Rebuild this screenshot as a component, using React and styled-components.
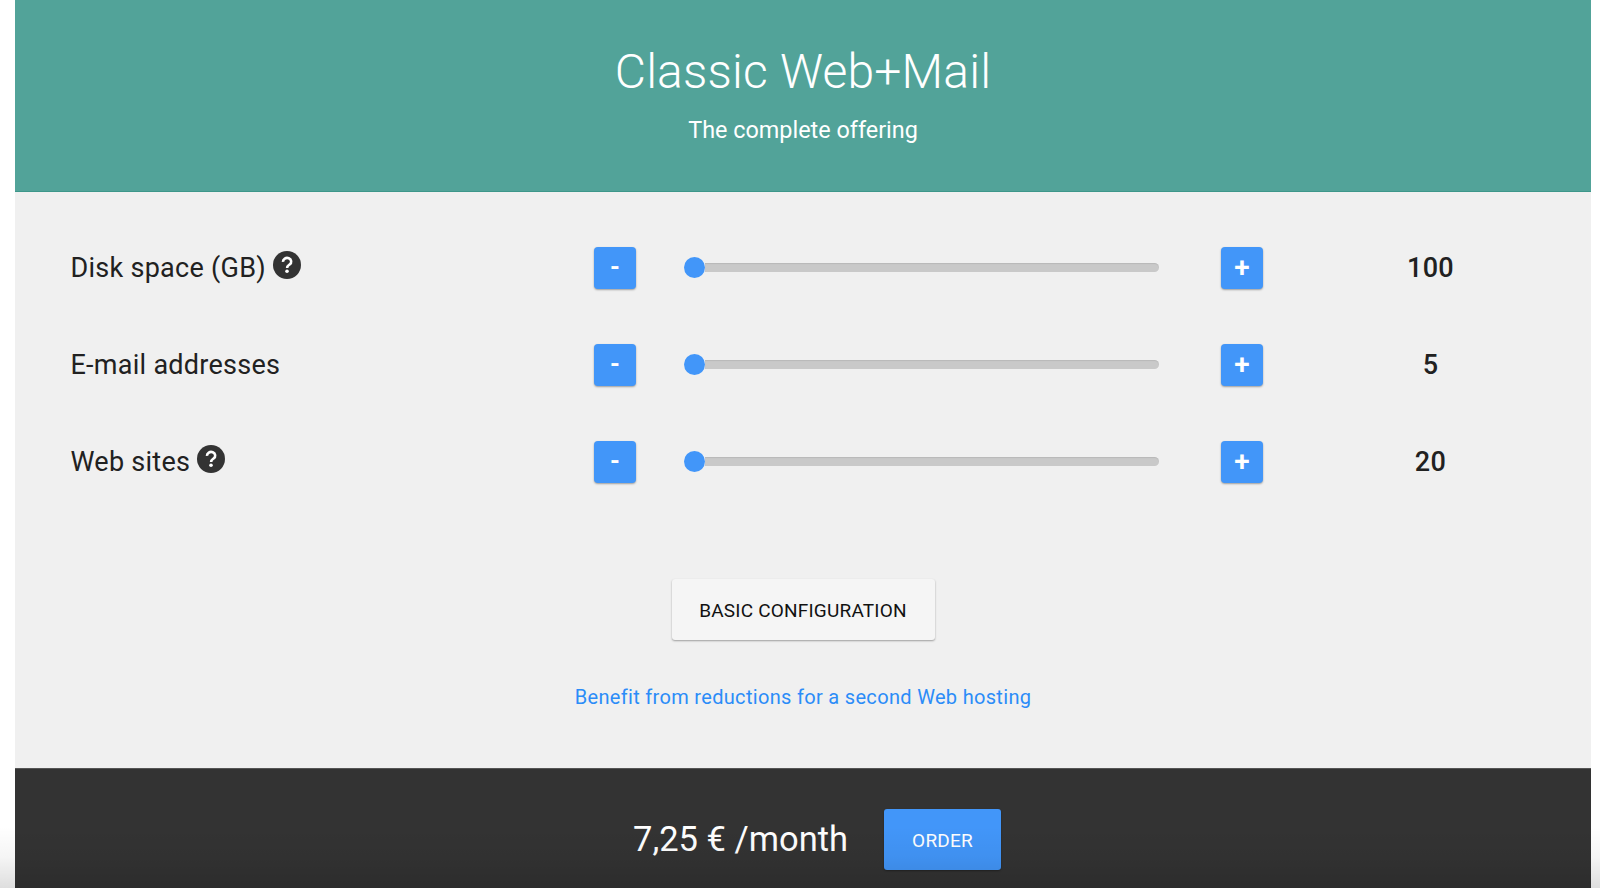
import { useState } from "react";
import styled, { createGlobalStyle } from "styled-components";

const GlobalStyle = createGlobalStyle`
  * {
    box-sizing: border-box;
  }
  body {
    margin: 0;
    background: #ffffff;
    font-family: Roboto, "Liberation Sans", sans-serif;
    color: #212121;
    overflow: hidden;
  }
`;
const Page = styled.main`
  position: relative;
  height: 888px;
  padding: 0 9px 0 15px;
  display: flex;
  flex-direction: column;
`;
const Header = styled.header`
  height: 192px;
  padding-top: 44px;
  background: #52a399;
  border-bottom: 1px solid #3d978a;
  color: #ffffff;
  text-align: center;
`;
const Title = styled.h1`
  margin: 0;
  font-size: 48px;
  font-weight: 300;
  line-height: 56px;
  letter-spacing: 0.2px;
`;
const Subtitle = styled.p`
  margin: 16px 0 0;
  font-size: 23.4px;
  line-height: 28px;
`;
const Content = styled.section`
  height: 576px;
  padding-top: 27px;
  background: #f0f0f0;
  display: flex;
  flex-direction: column;
  align-items: center;
`;
const Options = styled.div`
  width: 100%;
  margin-bottom: 69px;
`;
const Row = styled.div`
  height: 97px;
  padding-left: 55.5px;
  display: grid;
  grid-template-columns: 523.5px 42px 585px 42px 335px;
  align-items: center;
`;
const Label = styled.div`
  display: flex;
  align-items: center;
  font-size: 27px;
  line-height: 32px;
  letter-spacing: 0.27px;
`;
const HelpIcon = styled.svg`
  width: 28px;
  height: 28px;
  margin: -6px 0 0 7px;
`;
const StepButton = styled.button`
  width: 42px;
  height: 42px;
  padding: 0;
  border: 0;
  border-radius: 4px;
  background: #4296f9;
  box-shadow: 0 1px 2px rgba(0, 0, 0, 0.35);
  color: #ffffff;
  font-family: inherit;
  font-size: ${(props) => (props.$large ? "28px" : "25px")};
  font-weight: ${(props) => (props.$large ? 600 : 700)};
  line-height: 42px;
`;
const Slider = styled.div`
  height: 21px;
  margin: 0 62px 1px 48px;
  display: flex;
  align-items: center;
`;
const Thumb = styled.div`
  width: 21px;
  height: 21px;
  flex: none;
  border-radius: 50%;
  background: #4296f9;
`;
const Track = styled.div`
  flex: 1;
  height: 9px;
  border-radius: 0 5px 5px 0;
  background: #c9c9c9;
  box-shadow: inset 0 1px 1px rgba(0, 0, 0, 0.08);
`;
const Value = styled.div`
  font-size: 27px;
  font-weight: 500;
  text-align: center;
  letter-spacing: 0.3px;
`;
const Button = styled.button`
  width: ${(props) => (props.$primary ? "117px" : "263px")};
  height: 61px;
  padding: 2px 0 0;
  border: 0;
  border-radius: 3px;
  background: ${(props) => (props.$primary ? "#4296f9" : "#f5f5f5")};
  color: ${(props) => (props.$primary ? "#ffffff" : "#111111")};
  box-shadow: 0 1px 2px rgba(0, 0, 0, 0.35);
  font-family: inherit;
  font-size: 19px;
  letter-spacing: 0.2px;
`;
const Reductions = styled.a`
  margin-top: 44px;
  color: #2b8cf8;
  font-size: 20px;
  line-height: 26px;
  letter-spacing: 0.32px;
`;
const Footer = styled.footer`
  height: 120px;
  padding: 40px 0 0 618px;
  background: #333333;
  border-top: 1px solid #555555;
  display: flex;
  align-items: flex-start;
  gap: 37px;
`;
const Price = styled.div`
  width: 214px;
  color: #ffffff;
  font-size: 34.5px;
  line-height: 60px;
  white-space: nowrap;
`;
// soft shade over the bottom edge of the window
const Shade = styled.div`
  position: absolute;
  left: 0;
  right: 0;
  bottom: 0;
  height: 62px;
  pointer-events: none;
  background: linear-gradient(rgba(0, 0, 0, 0), rgba(0, 0, 0, 0.04) 50%, rgba(0, 0, 0, 0.13));
`;

const options = [
  { name: "Disk space (GB)", help: true, start: 100, step: 10 },
  { name: "E-mail addresses", help: false, start: 5, step: 1 },
  { name: "Web sites", help: true, start: 20, step: 1 },
];

function Help() {
  return (
    <HelpIcon viewBox="0 0 28 28">
      <circle cx="14" cy="14" r="14" fill="#333333" />
      <path
        d="M10 10.8a4.1 3.7 0 1 1 6.6 2.7c-1.5 1.1-2.5 1.6-2.5 3.6"
        fill="none"
        stroke="#ffffff"
        strokeWidth="2.6"
      />
      <circle cx="14" cy="20.2" r="1.8" fill="#ffffff" />
    </HelpIcon>
  );
}

function Option({ name, help, start, step }) {
  const [value, setValue] = useState(start);

  return (
    <Row>
      <Label>
        {name}
        {help && <Help />}
      </Label>
      <StepButton onClick={() => setValue(Math.max(start, value - step))}>-</StepButton>
      <Slider>
        <Thumb />
        <Track />
      </Slider>
      <StepButton $large onClick={() => setValue(value + step)}>+</StepButton>
      <Value>{value}</Value>
    </Row>
  );
}

export default function App() {
  return (
    <Page>
      <GlobalStyle />
      <Header>
        <Title>Classic Web+Mail</Title>
        <Subtitle>The complete offering</Subtitle>
      </Header>
      <Content>
        <Options>
          {options.map((option) => (
            <Option key={option.name} {...option} />
          ))}
        </Options>
        <Button>BASIC CONFIGURATION</Button>
        <Reductions>Benefit from reductions for a second Web hosting</Reductions>
      </Content>
      <Footer>
        <Price>7,25 € /month</Price>
        <Button $primary>ORDER</Button>
      </Footer>
      <Shade />
    </Page>
  );
}
